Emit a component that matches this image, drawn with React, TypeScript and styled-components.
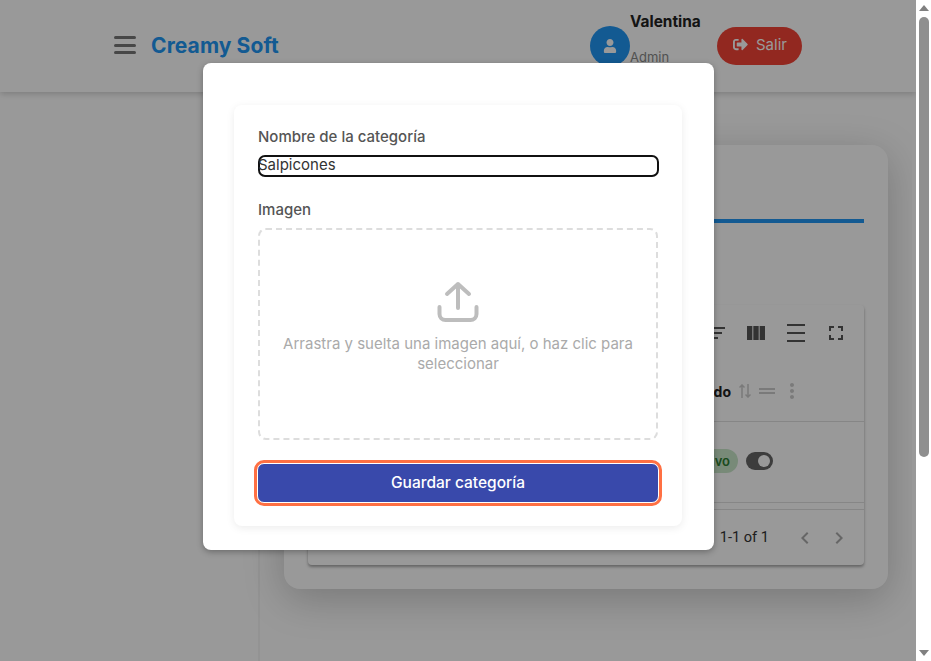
import * as React from 'react'
import styled, { createGlobalStyle } from 'styled-components'
import { FaSignOutAlt, FaUser } from 'react-icons/fa'
import {
  MdChevronLeft,
  MdChevronRight,
  MdDragHandle,
  MdFilterList,
  MdFullscreen,
  MdMoreVert,
  MdViewColumn,
} from 'react-icons/md'

const GlobalStyle = createGlobalStyle`
  html, body {
    margin: 0;
    height: 100%;
    overflow: hidden;
    background: #fff;
    font-family: Inter, "Liberation Sans", sans-serif;
  }
  * { box-sizing: border-box; }
`

const Shell = styled.div`
  display: flex;
  width: 931px;
  height: 661px;
  overflow: hidden;
`
const Viewport = styled.div`
  position: relative;
  width: 916px;
  height: 661px;
  overflow: hidden;
`
const Header = styled.header`
  position: relative;
  z-index: 1;
  display: flex;
  align-items: center;
  height: 92px;
  padding: 0 114px;
  background: #fff;
  box-shadow: 0 2px 6px rgba(0, 0, 0, 0.18);
`
const Burger = styled.svg`
  width: 22px;
  height: 20px;
  margin-right: 15px;
  margin-top: -3px;
`
const Brand = styled.div`
  flex: 1;
  margin-top: -1px;
  color: #2196f3;
  font-size: 21px;
  font-weight: 700;
  letter-spacing: 0.1px;
`
const Avatar = styled.div`
  display: flex;
  align-items: center;
  justify-content: center;
  width: 40px;
  height: 40px;
  border-radius: 50%;
  background: #2196f3;
  color: #fff;
  font-size: 14px;
`
const UserBlock = styled.div`
  display: flex;
  flex-direction: column;
  justify-content: space-between;
  width: 87px;
  height: 52px;
  margin-bottom: 14px;
`
const UserName = styled.div`
  color: #222;
  font-size: 15.4px;
  font-weight: 700;
  line-height: 18px;
`
const UserRole = styled.div`
  color: #888;
  font-size: 13px;
  line-height: 16px;
`
const LogoutButton = styled.button`
  display: flex;
  align-items: center;
  gap: 8px;
  width: 85px;
  height: 38px;
  padding: 0 0 3px 16px;
  border: 0;
  border-radius: 19px;
  background: #f44336;
  color: #fff;
  font: 400 15px Inter, sans-serif;
`
const Body = styled.div`
  display: flex;
  width: 912px;
  height: 569px;
  overflow: hidden;
`
const Sidebar = styled.aside`
  width: 260px;
  border-right: 2px solid #f5f5f5;
`
const Content = styled.main`
  padding: 53px 0 0 24px;
`
const Card = styled.section`
  width: 604px;
  height: 444px;
  padding: 74px 24px 0;
  border-radius: 16px;
  background: #fff;
  box-shadow: 0 10px 40px rgba(0, 0, 0, 0.22);
`
const TabLine = styled.div`
  height: 4px;
  margin-bottom: 82px;
  background: #2196f3;
`
const Table = styled.div`
  height: 260px;
  border-radius: 4px;
  background: #fff;
  box-shadow: 0 2px 3px rgba(0, 0, 0, 0.35);
  color: #555;
`
const Toolbar = styled.div`
  display: flex;
  justify-content: flex-end;
  align-items: center;
  height: 56px;
  padding-right: 8px;
`
const ToolButton = styled.span`
  display: flex;
  align-items: center;
  justify-content: center;
  width: 40px;
  height: 56px;
  font-size: 24px;
`
const DensityIcon = styled.svg`
  width: 18px;
  height: 18px;
`
const HeadRow = styled.div`
  display: flex;
  justify-content: flex-end;
  align-items: center;
  height: 61px;
  padding: 0 60px 0 0;
  border-bottom: 1px solid #e0e0e0;
  color: #222;
  font-size: 14px;
  font-weight: 700;
`
const SortIcon = styled.svg`
  width: 12px;
  height: 14px;
  margin: 0 8px 0 8px;
  color: #ccc;
`
const HeadIcon = styled.span`
  display: flex;
  align-items: center;
  margin-left: -4px;
  color: #ccc;
  font-size: 24px;
  & + & {
    margin-left: 1px;
  }
`
const DataRow = styled.div`
  display: flex;
  justify-content: flex-end;
  align-items: center;
  gap: 8px;
  height: 81px;
  padding: 0 91px 2px 0;
  border-bottom: 1px solid #e0e0e0;
`
const Chip = styled.span`
  width: 70px;
  height: 24px;
  padding-right: 8px;
  border-radius: 12px;
  background: #c8e6c9;
  color: #2e7d32;
  font-size: 13px;
  font-weight: 600;
  line-height: 24px;
  text-align: right;
`
const Toggle = styled.span`
  display: flex;
  align-items: center;
  justify-content: flex-end;
  width: 27px;
  height: 18px;
  padding-right: 3px;
  border-radius: 9px;
  background: #666;
  &::after {
    content: '';
    width: 12px;
    height: 12px;
    border-radius: 50%;
    background: #fff;
  }
`
const Footer = styled.div`
  display: flex;
  justify-content: flex-end;
  align-items: center;
  height: 56px;
  margin-top: 6px;
  padding-right: 8px;
  border-top: 1px solid #e0e0e0;
  color: #333;
  font-family: Roboto, sans-serif;
  font-size: 14.6px;
`
const PageCount = styled.span`
  margin-right: 19px;
  padding-bottom: 2px;
`
const PageArrow = styled.span`
  display: flex;
  justify-content: center;
  width: 34px;
  color: #aaa;
  font-size: 24px;
`
const Overlay = styled.div`
  position: absolute;
  inset: 0;
  z-index: 2;
  background: rgba(0, 0, 0, 0.4);
`
const Dialog = styled.div`
  position: absolute;
  z-index: 3;
  left: 203px;
  top: 63px;
  width: 511px;
  height: 487px;
  padding: 42px 32px 24px 31px;
  border-radius: 8px;
  background: #fff;
  box-shadow: 0 2px 6px rgba(0, 0, 0, 0.3);
`
const FormCard = styled.form`
  height: 421px;
  padding: 22px 24px 0;
  border-radius: 8px;
  background: #fff;
  box-shadow: 0 2px 8px rgba(0, 0, 0, 0.08);
`
const FieldLabel = styled.label`
  display: block;
  color: #555;
  font-size: 15px;
  font-weight: 500;
  line-height: 20px;
`
const NameInput = styled.div`
  width: 401px;
  height: 22px;
  margin: 8px 0 23px;
  border: 2px solid #111;
  border-radius: 7px;
  color: #333;
  font-size: 15px;
  line-height: 16px;
  text-indent: -2px;
`
const DropZone = styled.div`
  display: flex;
  flex-direction: column;
  align-items: center;
  width: 400px;
  height: 212px;
  margin-top: 8px;
  padding: 51px 20px 0;
  border: 2px dashed #ddd;
  border-radius: 8px;
  color: #aaa;
  font-size: 15px;
  line-height: 20px;
  text-align: center;
`
const UploadIcon = styled.svg`
  width: 42px;
  height: 42px;
  margin-bottom: 11px;
`
const SaveButton = styled.button`
  display: block;
  width: 402px;
  height: 40px;
  margin: 23px 0 0 -1px;
  padding: 0 0 2px;
  border: 1px solid #fff;
  border-radius: 7px;
  outline: 3px solid #ff7043;
  background: #3949ab;
  color: #fff;
  font: 500 15.5px Inter, sans-serif;
`
const Scrollbar = styled.div`
  display: flex;
  flex-direction: column;
  align-items: center;
  width: 15px;
  height: 661px;
  background: #fff;
`
const ScrollArrow = styled.span<{ $down?: boolean }>`
  width: 0;
  height: 0;
  margin: 5px 0;
  border-left: 5px solid transparent;
  border-right: 5px solid transparent;
  ${props =>
    props.$down ? 'border-top: 6px solid #808080;' : 'border-bottom: 6px solid #808080;'}
`
const ScrollThumb = styled.div`
  flex: none;
  width: 10px;
  height: 440px;
  margin-top: 1px;
  border-radius: 6px;
  background: #8f8f8f;
`
const ScrollGap = styled.div`
  flex: 1;
`

export default function App() {
  return (
    <Shell>
      <GlobalStyle />
      <Viewport>
        <Header>
          <Burger viewBox="0 0 22 20" fill="none" stroke="#777" strokeWidth="3" strokeLinecap="round">
            <path d="M1.5 2.5h19M1.5 10.5h19M1.5 17.5h19" />
          </Burger>
          <Brand>Creamy Soft</Brand>
          <Avatar>
            <FaUser />
          </Avatar>
          <UserBlock>
            <UserName>Valentina</UserName>
            <UserRole>Admin</UserRole>
          </UserBlock>
          <LogoutButton type="button">
            <FaSignOutAlt />
            Salir
          </LogoutButton>
        </Header>
        <Body>
          <Sidebar />
          <Content>
            <Card>
              <TabLine />
              <Table>
                <Toolbar>
                  <ToolButton>
                    <MdFilterList />
                  </ToolButton>
                  <ToolButton>
                    <MdViewColumn />
                  </ToolButton>
                  <ToolButton>
                    <DensityIcon viewBox="0 0 18 18" fill="none" stroke="currentColor" strokeWidth="2">
                      <path d="M0 1h18M0 9h18M0 17h18" />
                    </DensityIcon>
                  </ToolButton>
                  <ToolButton>
                    <MdFullscreen />
                  </ToolButton>
                </Toolbar>
                <HeadRow>
                  Estado
                  <SortIcon viewBox="0 0 12 14" fill="none" stroke="currentColor" strokeWidth="1.5">
                    <path d="M3 14V1M.5 3.5 3 1l2.5 2.5M9 0v13M6.5 10.5 9 13l2.5-2.5" />
                  </SortIcon>
                  <HeadIcon>
                    <MdDragHandle />
                  </HeadIcon>
                  <HeadIcon>
                    <MdMoreVert />
                  </HeadIcon>
                </HeadRow>
                <DataRow>
                  <Chip>Activo</Chip>
                  <Toggle />
                </DataRow>
                <Footer>
                  <PageCount>1-1 of 1</PageCount>
                  <PageArrow>
                    <MdChevronLeft />
                  </PageArrow>
                  <PageArrow>
                    <MdChevronRight />
                  </PageArrow>
                </Footer>
              </Table>
            </Card>
          </Content>
        </Body>
        <Overlay />
        <Dialog>
          <FormCard>
            <FieldLabel>Nombre de la categoría</FieldLabel>
            <NameInput>Salpicones</NameInput>
            <FieldLabel>Imagen</FieldLabel>
            <DropZone>
              <UploadIcon viewBox="0 0 42 42" fill="none" stroke="#bdbdbd" strokeWidth="4" strokeLinecap="round" strokeLinejoin="round">
                <path d="M2.5 26v7a6 6 0 0 0 6 6h25a6 6 0 0 0 6-6v-7" />
                <path d="M21 27V3M10 13 21 3l11 10" />
              </UploadIcon>
              Arrastra y suelta una imagen aquí, o haz clic para seleccionar
            </DropZone>
            <SaveButton type="button">Guardar categoría</SaveButton>
          </FormCard>
        </Dialog>
      </Viewport>
      <Scrollbar>
        <ScrollArrow />
        <ScrollThumb />
        <ScrollGap />
        <ScrollArrow $down />
      </Scrollbar>
    </Shell>
  )
}
